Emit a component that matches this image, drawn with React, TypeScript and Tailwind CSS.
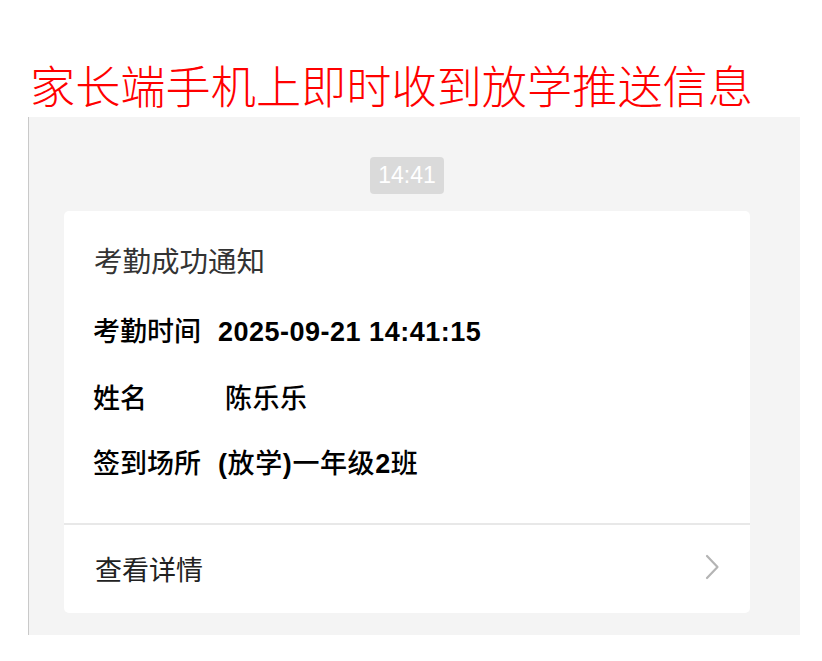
import React from "react";

const font = { fontFamily: '"Liberation Sans", "Noto Sans CJK SC", sans-serif' };

export default function App() {
  return (
    <div className="w-[822px] h-[661px] bg-white" style={font}>
      <div className="h-[117px] flex items-end pl-[30px] pb-[5px]">
        <div
          className="text-[45.2px] leading-[54px] text-[#ff0000] whitespace-nowrap"
          style={{ fontFamily: '"Noto Sans CJK SC", sans-serif', fontWeight: 300 }}
        >
          家长端手机上即时收到放学推送信息
        </div>
      </div>
      <div className="ml-[28px] w-[772px] h-[518px] bg-[#f4f4f4] border-l border-[#c9c9c9] flex flex-col">
        <div className="flex justify-center pt-[40px] pr-[15px]">
          <div className="w-[74px] h-[37px] rounded-[4px] bg-[#dadada] text-white text-[23px] flex items-center justify-center">
            14:41
          </div>
        </div>
        <div className="ml-[35px] mt-[17px] w-[686px] bg-white rounded-[5px] flex flex-col">
          <div className="px-[30px] pt-[33px] pb-[41px]">
            <div className="text-[28.5px] leading-[36px] text-[#333333]">考勤成功通知</div>
            <div className="mt-[34px] text-[27px] leading-[36px] text-black flex font-medium whitespace-nowrap">
              <span className="w-[125px] -ml-[1px]">考勤时间</span>
              <span className="font-bold tracking-[0.5px]">2025-09-21 14:41:15</span>
            </div>
            <div className="mt-[31px] text-[27px] leading-[36px] text-black flex font-medium whitespace-nowrap">
              <span className="w-[132px] -ml-[1px]">姓名</span>
              <span className="tracking-[0.5px]">陈乐乐</span>
            </div>
            <div className="mt-[29px] text-[27px] leading-[36px] text-black flex font-medium whitespace-nowrap">
              <span className="w-[125px] -ml-[1px]">签到场所</span>
              <span className="tracking-[0.6px]">
                <span className="font-bold">(</span>放学<span className="font-bold">)</span>一年级<span className="font-bold">2</span>班
              </span>
            </div>
          </div>
          <div className="h-[2px] bg-[#e8e8e8]" />
          <div className="h-[88px] flex items-center justify-between pl-[31px] pr-[30px]">
            <span className="text-[27px] text-[#222222] leading-[36px] mt-[4px]">查看详情</span>
            <svg width="15" height="26" viewBox="0 0 15 26" className="mt-[-4px]">
              <path d="M2 2 L12.5 13 L2 24" fill="none" stroke="#b4b4b4" strokeWidth="2.2" strokeLinecap="round" strokeLinejoin="round" />
            </svg>
          </div>
        </div>
      </div>
    </div>
  );
}
